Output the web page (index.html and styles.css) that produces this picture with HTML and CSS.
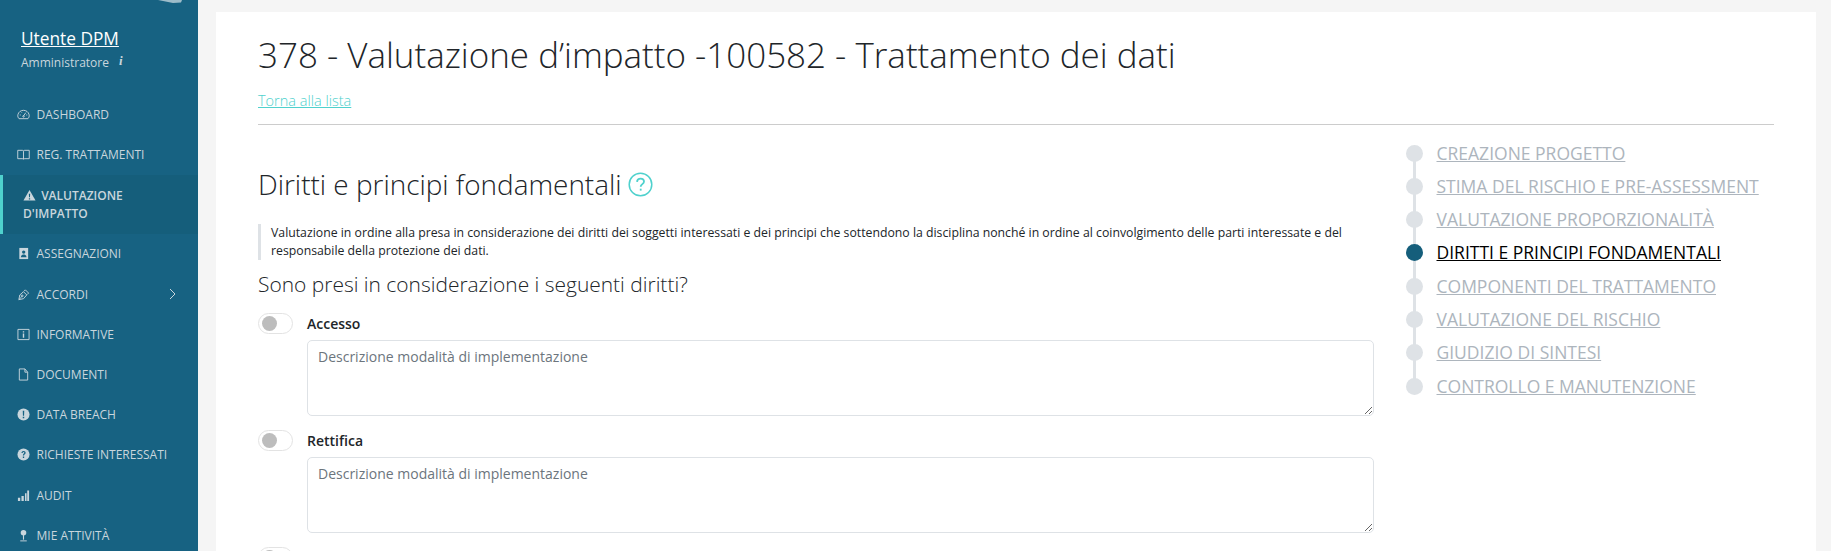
FILE: index.html
```html
<!DOCTYPE html>
<html lang="it">

<head>
    <meta charset="UTF-8">
    <title>Valutazione d'impatto</title>
    <link rel="stylesheet" href="styles.css">
</head>

<body>
    <div class="app">
        <aside class="sidebar">
            <svg class="logoBit" width="24" height="4" viewBox="0 0 24 4"><path d="M0 0h24l-1 2.500-8 .5z" fill="#9dbcc9"/></svg>
            <div class="user">
                <a class="userName" href="#">Utente DPM</a>
                <div class="userRole">Amministratore <i class="infoI">i</i></div>
            </div>
            <nav class="menu">
                <a class="menuItem" href="#">
                    <svg class="ico" viewBox="0 0 14 14" fill="none" stroke="currentColor"><path d="M2.200 11.500h9.600c1-1 1.700-2.600 1.200-4.400C12.300 4.200 9.800 2.500 7 2.500S1.700 4.200 1 7.100c-.5 1.800.2 3.400 1.200 4.400z"/><path d="M7 8.500l2.500-3.500M3 7.500h1M10 7.500h1M5 4.800l.4.600"/><circle cx="7" cy="9" r=".8"/></svg>
                    <span>DASHBOARD</span>
                </a>
                <a class="menuItem" href="#">
                    <svg class="ico" viewBox="0 0 14 14" fill="none" stroke="currentColor"><path d="M.8 2.500h5c.7 0 1.200.4 1.200 1 0-.6.500-1 1.200-1h5v9H8.500c-.8 0-1.500.2-1.500.5 0-.3-.7-.5-1.500-.5H.8zM7 3.500V12"/></svg>
                    <span>REG. TRATTAMENTI</span>
                </a>
                <a class="menuItem active" href="#">
                    <svg class="ico icoWarn" viewBox="0 0 14 14"><path d="M7 1l6.500 11.500H.5z" fill="currentColor"/><path d="M6.300 5h1.400l-.2 4h-1zM6.300 10h1.400v1.300H6.300z" fill="#155e7b"/></svg>
                    <span>VALUTAZIONE D'IMPATTO</span>
                </a>
                <a class="menuItem" href="#">
                    <svg class="ico" viewBox="0 0 14 14"><path d="M2.500 1h9.500v12H2.500z" fill="currentColor"/><circle cx="7.200" cy="5.500" r="1.800" fill="#176282"/><path d="M4.200 11c0-2 1.300-3 3-3s3 1 3 3z" fill="#176282"/></svg>
                    <span>ASSEGNAZIONI</span>
                </a>
                <a class="menuItem" href="#">
                    <svg class="ico" viewBox="0 0 14 14" fill="none" stroke="currentColor"><path d="M2 12.500l1-5 4-3.500 3.500 3.500-3.500 4zM2 12.500l3-3M7.500 3.500l1.500-1.500 3.500 3.500-1.500 1.500"/><circle cx="5.500" cy="8.500" r="1"/></svg>
                    <span>ACCORDI</span>
                    <svg class="chevron" width="7" height="12" viewBox="0 0 7 12" fill="none" stroke="currentColor"><path d="M1 1l5 5-5 5"/></svg>
                </a>
                <a class="menuItem" href="#">
                    <svg class="ico" viewBox="0 0 14 14" fill="none" stroke="currentColor"><path d="M1 1.500h12v11H1z"/><path d="M7 6v4.500M7 3.500v1.300" stroke-width="1.500"/></svg>
                    <span>INFORMATIVE</span>
                </a>
                <a class="menuItem" href="#">
                    <svg class="ico" viewBox="0 0 14 14" fill="none" stroke="currentColor"><path d="M2.500 1h6l3 3.500v8.500h-9zM8.500 1v3.500h3"/></svg>
                    <span>DOCUMENTI</span>
                </a>
                <a class="menuItem" href="#">
                    <svg class="ico" viewBox="0 0 14 14"><circle cx="7" cy="7" r="6.500" fill="currentColor"/><path d="M6.200 3h1.600l-.2 5.300H6.400zM6.200 9.300h1.600V11H6.200z" fill="#176282"/></svg>
                    <span>DATA BREACH</span>
                </a>
                <a class="menuItem" href="#">
                    <svg class="ico" viewBox="0 0 14 14"><circle cx="7" cy="7" r="6.500" fill="currentColor"/><path d="M4.800 5.300C4.900 4 5.800 3.200 7.100 3.200c1.300 0 2.200.8 2.200 1.900 0 1.800-1.700 1.600-1.700 3.100H6.300c0-2.100 1.600-2 1.600-3.100 0-.4-.3-.7-.8-.7-.6 0-.9.400-1 1zM6.300 9.200h1.400v1.500H6.300z" fill="#176282"/></svg>
                    <span>RICHIESTE INTERESSATI</span>
                </a>
                <a class="menuItem" href="#">
                    <svg class="ico" viewBox="0 0 14 14" fill="currentColor"><path d="M1 9.500h2.500V13H1zM4.800 7.500h2.500V13H4.800zM8.600 4.500h1.700V13H8.600zM11 1.500h2V13h-2z"/></svg>
                    <span>AUDIT</span>
                </a>
                <a class="menuItem" href="#">
                    <svg class="ico" viewBox="0 0 14 14"><circle cx="7" cy="4" r="3" fill="currentColor"/><path d="M6.400 6.500h1.200v5H6.400z" fill="currentColor"/><path d="M3.500 12.800h7" stroke="currentColor" fill="none"/></svg>
                    <span>MIE ATTIVITÀ</span>
                </a>
            </nav>
        </aside>

        <main class="content">
            <div class="card">
                <h1 class="pageTitle">378 - Valutazione d’impatto -100582 - Trattamento dei dati</h1>
                <a class="backLink" href="#">Torna alla lista</a>
                <hr class="divider">
                <div class="columns">
                    <section class="formCol">
                        <h2 class="sectionTitle">Diritti e principi fondamentali
                            <svg class="helpIco" width="25" height="25" viewBox="0 0 25 25" fill="none"><circle cx="12.500" cy="12.500" r="11.300" stroke="#4fd1cd" stroke-width="1.500"/><path d="M9 9.800c.2-2 1.600-3.200 3.600-3.200s3.400 1.200 3.400 2.900c0 2.600-3.300 2.600-3.300 5.200" stroke="#4fd1cd" stroke-width="1.800"/><path d="M11.800 16.700h1.800v1.900h-1.800z" fill="#4fd1cd"/></svg>
                        </h2>
                        <blockquote class="note">Valutazione in ordine alla presa in considerazione dei diritti dei soggetti interessati e dei principi che sottendono la disciplina nonché in ordine al coinvolgimento delle parti interessate e del responsabile della protezione dei dati.</blockquote>
                        <h3 class="question">Sono presi in considerazione i seguenti diritti?</h3>

                        <div class="rightRow">
                            <span class="toggle"><span class="knob"></span></span>
                            <div class="rightBody">
                                <label class="rightLabel">Accesso</label>
                                <textarea class="rightText" placeholder="Descrizione modalità di implementazione"></textarea>
                            </div>
                        </div>
                        <div class="rightRow">
                            <span class="toggle"><span class="knob"></span></span>
                            <div class="rightBody">
                                <label class="rightLabel">Rettifica</label>
                                <textarea class="rightText" placeholder="Descrizione modalità di implementazione"></textarea>
                            </div>
                        </div>
                        <div class="rightRow">
                            <span class="toggle"><span class="knob"></span></span>
                        </div>
                    </section>

                    <ul class="steps">
                        <li class="step"><a href="#">CREAZIONE PROGETTO</a></li>
                        <li class="step"><a href="#">STIMA DEL RISCHIO E PRE-ASSESSMENT</a></li>
                        <li class="step"><a href="#">VALUTAZIONE PROPORZIONALITÀ</a></li>
                        <li class="step current"><a href="#">DIRITTI E PRINCIPI FONDAMENTALI</a></li>
                        <li class="step"><a href="#">COMPONENTI DEL TRATTAMENTO</a></li>
                        <li class="step"><a href="#">VALUTAZIONE DEL RISCHIO</a></li>
                        <li class="step"><a href="#">GIUDIZIO DI SINTESI</a></li>
                        <li class="step"><a href="#">CONTROLLO E MANUTENZIONE</a></li>
                    </ul>
                </div>
            </div>
        </main>
    </div>
</body>

</html>
```

FILE: styles.css
```css
html,
body {
    margin: 0;
    padding: 0;
    height: 100%;
    overflow: hidden;
}

body {
    font-family: "Open Sans", sans-serif;
    font-size: 14px;
    color: #212529;
    background-color: #f5f5f5;
}

a {
    color: inherit;
}

.app {
    display: flex;
    height: 551px;
    overflow: hidden;
}

/* sidebar */
.sidebar {
    position: relative;
    flex: 0 0 198px;
    background-color: #176282;
    color: #c9d6dd;
}

.logoBit {
    position: absolute;
    top: 0;
    left: 158px;
}

.user {
    padding: 27px 0 0 21px;
    height: 67.5px;
}

.userName {
    display: inline-block;
    font-size: 17.3px;
    line-height: 24px;
    color: #fff;
}

.userRole {
    font-size: 12px;
    line-height: 18px;
    margin-top: 3px;
}

.infoI {
    font-family: "Liberation Serif", serif;
    font-size: 13px;
    font-weight: 700;
    margin-left: 7px;
    position: relative;
    top: -2px;
}

.menu {
    display: flex;
    flex-direction: column;
}

.menuItem {
    display: flex;
    align-items: center;
    gap: 6.5px;
    height: 40.2px;
    padding-left: 17px;
    font-size: 12px;
    text-decoration: none;
    box-sizing: border-box;
}

.ico {
    flex: 0 0 13px;
    width: 13px;
    height: 13px;
}

.chevron {
    margin-left: auto;
    margin-right: 22px;
}

.menuItem.active {
    display: block;
    height: 59px;
    padding: 12px 40px 0 20px;
    border-left: 3px solid #4fd1cd;
    background-color: #155e7b;
    font-weight: 600;
    line-height: 18px;
}

.icoWarn {
    margin-right: 2px;
    vertical-align: -2px;
}

/* content */
.content {
    flex: 1;
    padding: 12px 15px 0 18px;
}

.card {
    background-color: #fff;
    padding: 16px 42px 0 42px;
    height: 600px;
    box-sizing: border-box;
}

.pageTitle {
    margin: 0;
    font-size: 34.96px;
    line-height: 54px;
    font-weight: 300;
}

.backLink {
    display: inline-block;
    margin-top: 8px;
    font-size: 14.5px;
    line-height: 21px;
    font-weight: 300;
    color: #4fd1cd;
}

.divider {
    border: 0;
    border-top: 1px solid #ccc;
    margin: 13px 0 0;
}

.columns {
    display: flex;
    justify-content: space-between;
}

.formCol {
    flex: 0 0 1116px;
}

.sectionTitle {
    display: flex;
    align-items: center;
    gap: 6px;
    margin: 38px 0 0;
    font-size: 27.9px;
    line-height: 42px;
    font-weight: 300;
}

.note {
    margin: 19px 0 0;
    padding-left: 10px;
    border-left: 3px solid #dee2e6;
    font-size: 12.28px;
    line-height: 18px;
}

.question {
    margin: 9px 0 0;
    font-size: 20.95px;
    line-height: 30px;
    font-weight: 300;
}

.rightRow {
    display: flex;
    gap: 14px;
    margin-bottom: 0.5px;
}

.toggle {
    flex: 0 0 auto;
    display: flex;
    align-items: center;
    width: 35px;
    height: 21px;
    margin-top: 14px;
    padding-left: 3px;
    box-sizing: border-box;
    border: 1px solid #e3e3e3;
    border-radius: 11px;
    background-color: #fff;
}

.knob {
    width: 15px;
    height: 15px;
    border-radius: 50%;
    background-color: #bdbdbd;
}

.rightBody {
    flex: 1;
    display: flex;
    flex-direction: column;
}

.rightLabel {
    font-weight: 600;
    line-height: 21px;
    margin-top: 14px;
    margin-bottom: 6px;
}

.rightText {
    height: 75.5px;
    box-sizing: border-box;
    padding: 5px 10px;
    border: 1px solid #dee2e6;
    border-radius: 5px;
    font-family: inherit;
    font-size: 14px;
    line-height: 21px;
    color: #495057;
    outline: none;
}

.rightText::placeholder {
    color: #6c757d;
    opacity: 1;
}

/* steps */
.steps {
    flex: 0 0 368px;
    list-style: none;
    margin: 11.5px 0 0;
    padding: 0;
}

.step {
    position: relative;
    height: 33.3px;
    padding-left: 30.5px;
    font-size: 17.5px;
    line-height: 33px;
    color: #adb5bd;
}

.step::before {
    content: "";
    position: absolute;
    left: 0;
    top: 8px;
    width: 17px;
    height: 17px;
    border-radius: 50%;
    background-color: #dee2e6;
}

.step::after {
    content: "";
    position: absolute;
    left: 7px;
    top: 16px;
    width: 3px;
    height: 34px;
    background-color: #dee2e6;
}

.step:last-child::after {
    display: none;
}

.step.current {
    color: #000;
}

.step.current::before {
    background-color: #155e7b;
    z-index: 1;
}
```
